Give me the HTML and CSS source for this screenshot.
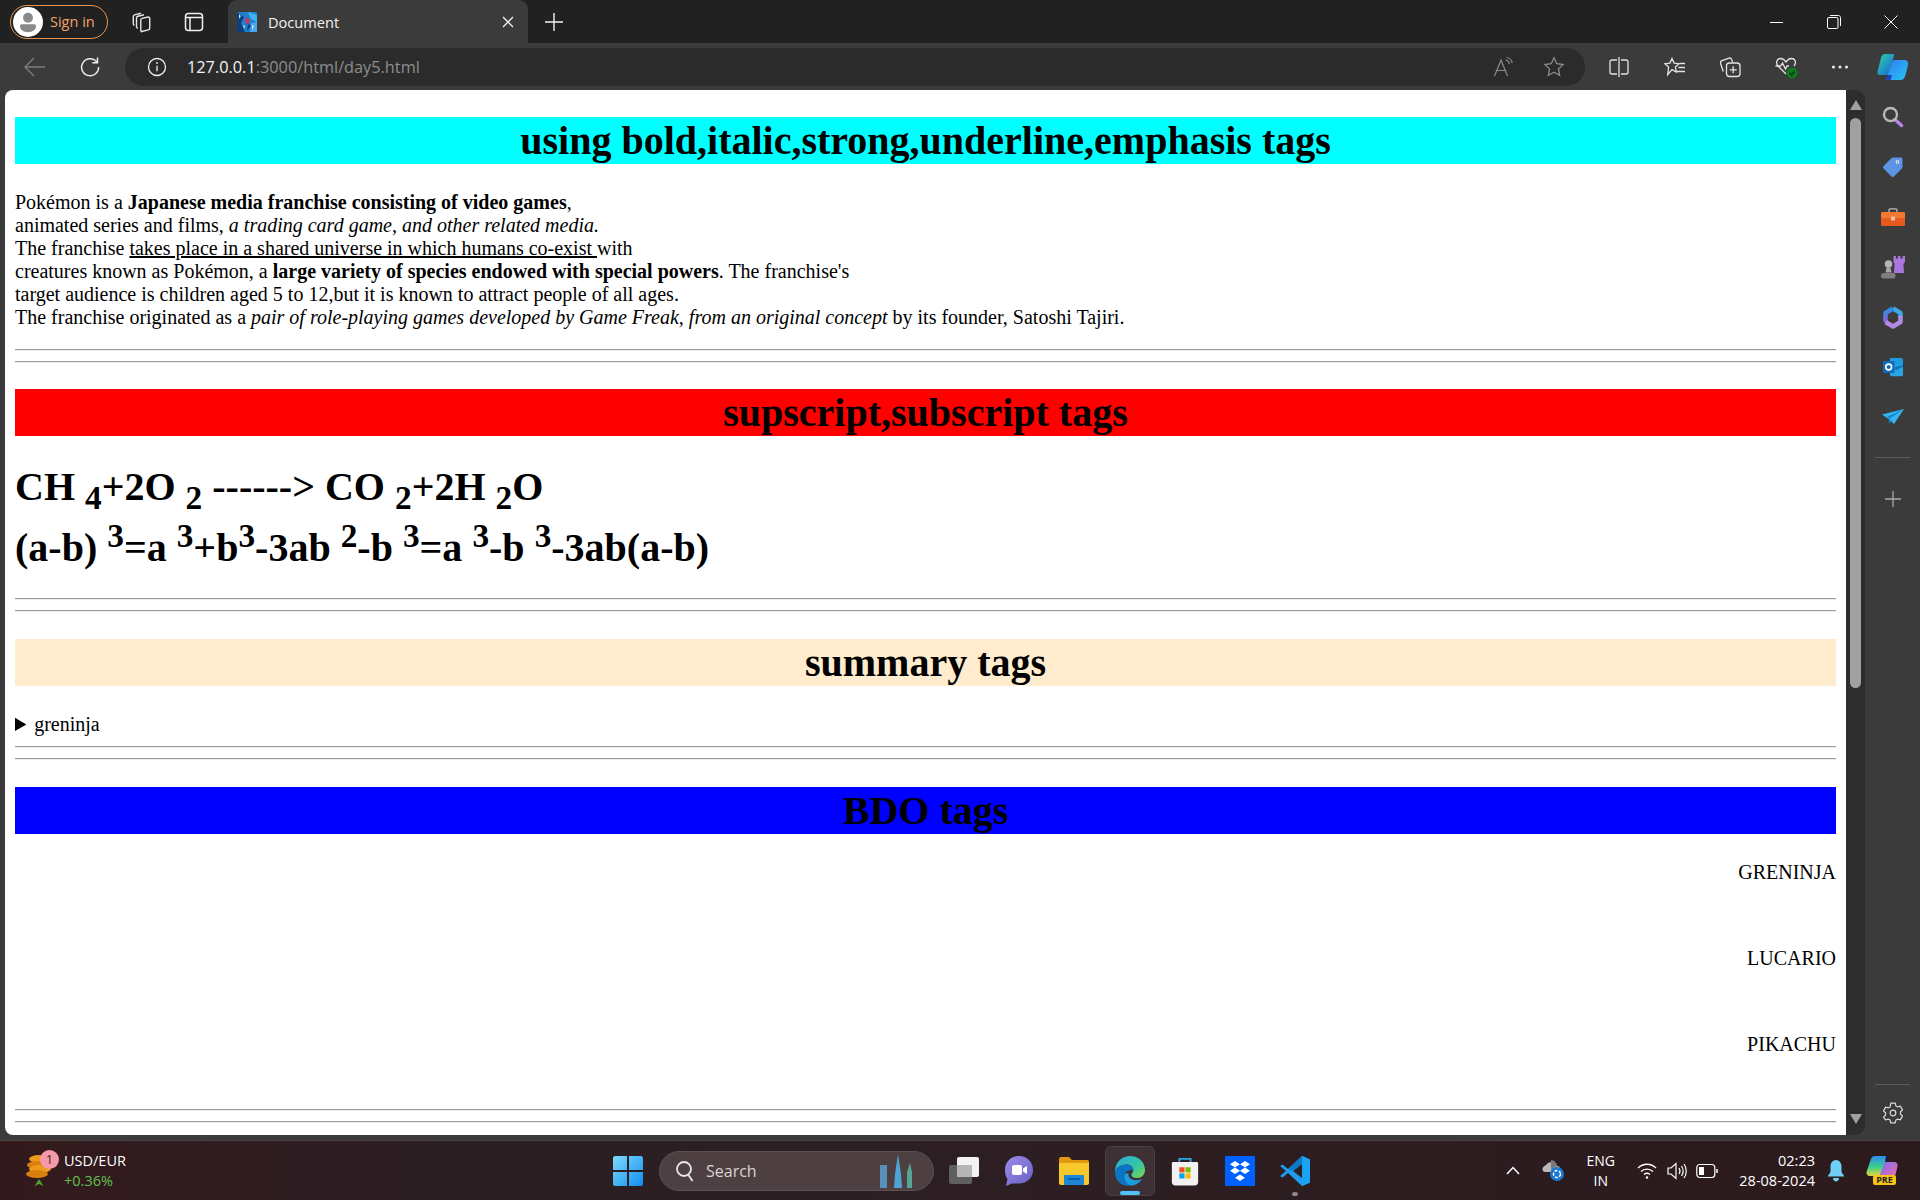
FILE: index.html
```html
<!DOCTYPE html>
<html lang="en">
<head>
    <meta charset="UTF-8">
    <title>Document</title>
    <link rel="stylesheet" href="styles.css">
</head>
<body>
    <!-- tab strip -->
    <div class="tabbar">
        <div class="signin">
            <span class="avatar">
                <svg width="30" height="30" viewBox="0 0 28 28"><circle cx="14" cy="14" r="14" fill="#fff"/><circle cx="14" cy="10" r="4.600" fill="#8a8a8a"/><path d="M6.500 17.500c0-1 .8-1.500 1.600-1.500h11.800c.8 0 1.600.5 1.600 1.500 0 4-3.400 6-7.500 6s-7.500-2-7.500-6z" fill="#8a8a8a"/></svg>
            </span>
            <span>Sign in</span>
        </div>
        <span class="strip-btn first">
            <svg width="22" height="22" viewBox="0 0 22 22" fill="none" stroke="#e6e6e6" stroke-width="1.400"><path d="M10.500 20.500l7-1.600c.8-.2 1.200-.8 1.200-1.600V7.200c0-.8-.7-1.400-1.600-1.200l-6 1.400c-.8.2-1.300.8-1.300 1.600v10.600c0 .7.300 1 .7 1.100z"/><path d="M6.800 17.500c-.9-.5-1.300-1-1.300-2V7c0-.9.500-1.500 1.300-1.700L13 3.700"/><path d="M3.400 14.500c-.8-.5-1.100-1.100-1.100-1.900V5.600c0-.9.500-1.500 1.300-1.700L10 2.300"/></svg>
        </span>
        <span class="strip-btn">
            <svg width="20" height="20" viewBox="0 0 20 20" fill="none" stroke="#f0f0f0" stroke-width="1.500"><rect x="1.500" y="1.500" width="17" height="17" rx="3"/><path d="M1.500 5.500h17M6 5.500v13"/></svg>
        </span>
        <div class="tab">
            <svg class="favicon" width="20" height="20" viewBox="0 0 20 20"><rect width="20" height="20" fill="#1f7fd0"/><path d="M0 0l7 5-3 6 4 9H0z" fill="#0d3f7a"/><path d="M11 0l9 3v7l-6-3z" fill="#3fb4ee"/><path d="M9 5l4 3-2 5-3-3z" fill="#c9395a"/><path d="M14 11l6-1v10h-7z" fill="#49a9ea"/><path d="M2 2l2 2-2 3zM15 13l2 1-2 4zM6 13l2 1-1 3z" fill="#bfe6fa"/><path d="M11 12l3 2-4 5z" fill="#12417f"/></svg>
            <span class="tab-title">Document</span>
            <svg class="tab-close" width="12" height="12" viewBox="0 0 12 12" stroke="#f2f2f2" stroke-width="1.300"><path d="M1 1l10 10M11 1L1 11"/></svg>
        </div>
        <svg class="newtab" width="18" height="18" viewBox="0 0 18 18" stroke="#f2f2f2" stroke-width="1.400"><path d="M9 0v18M0 9h18"/></svg>
        <div class="win-controls">
            <svg width="14" height="14" viewBox="0 0 14 14" stroke="#fff" stroke-width="1"><path d="M0 7.500h13"/></svg>
            <svg width="14" height="14" viewBox="0 0 14 14" fill="none" stroke="#fff" stroke-width="1"><rect x=".5" y="2.500" width="10.500" height="11" rx="1.500"/><path d="M3 .5h8.500c1 0 2 1 2 2V11"/></svg>
            <svg width="14" height="14" viewBox="0 0 14 14" stroke="#fff" stroke-width="1"><path d="M.5.5l13 13M13.500.5l-13 13"/></svg>
        </div>
    </div>

    <!-- address bar -->
    <div class="toolbar">
        <svg class="back" width="22" height="20" viewBox="0 0 22 20" fill="none" stroke="#7d7d7d" stroke-width="1.400"><path d="M21 10H1M10 1l-9 9 9 9"/></svg>
        <svg class="reload" width="22" height="22" viewBox="0 0 22 22" fill="none" stroke="#ececec" stroke-width="1.500"><path d="M18 6.300A8.500 8.500 0 1 0 19.600 11"/><path d="M18.500 1.500v5.200h-5.200"/></svg>
        <div class="address">
            <svg width="20" height="20" viewBox="0 0 20 20" fill="none" stroke="#efefef" stroke-width="1.300"><circle cx="10" cy="10" r="8.500"/><path d="M10 8.800v5.500"/><circle cx="10" cy="6" r=".9" fill="#efefef" stroke="none"/></svg>
            <span class="url"><span class="host">127.0.0.1</span>:3000/html/day5.html</span>
            <svg class="read" width="22" height="22" viewBox="0 0 22 22" fill="none" stroke="#8c8c8c" stroke-width="1.200"><path d="M1.500 20L8 4l6.500 16M4 14.500h9"/><path d="M12.500 4c2 .3 3.500 1.800 3.900 3.800M13.500 1.500c3 .4 5.200 2.600 5.700 5.600"/></svg>
            <svg class="fav" width="22" height="22" viewBox="0 0 22 22" fill="none" stroke="#8c8c8c" stroke-width="1.300"><path d="M11 1.800l2.800 5.900 6.400.8-4.700 4.400 1.200 6.400-5.700-3.100-5.700 3.100 1.200-6.400L1.800 8.500l6.400-.8z"/></svg>
        </div>
        <div class="tools">
            <svg width="20" height="20" viewBox="0 0 20 20" fill="none" stroke="#e4e4e4" stroke-width="1.300"><path d="M8 3H3C1.800 3 1 3.800 1 5v10c0 1.200.8 2 2 2h5M12 3h5c1.200 0 2 .8 2 2v10c0 1.200-.8 2-2 2h-5M10 0v20"/></svg>
            <svg width="22" height="20" viewBox="0 0 22 20" fill="none" stroke="#e4e4e4" stroke-width="1.300"><path d="M8 1.500l2.100 4.600 4.900.6-3.600 3.400.9 4.900L8 12.600l-4.300 5 .9-7.500L1 6.700l4.900-.6z"/><path d="M15.500 6.500h5.500M14.500 10.500h6.500M12.500 14.500H21"/></svg>
            <svg width="22" height="22" viewBox="0 0 22 22" fill="none" stroke="#e4e4e4" stroke-width="1.300"><rect x="7.500" y="7" width="13.500" height="13.500" rx="3"/><path d="M14.200 10.300v7M10.700 13.800h7"/><path d="M4.300 15.500l-2.700-8C1.300 6 2 5 3 4.600l7-2.500c1-.3 2.200.2 2.600 1.300L13.500 6"/></svg>
            <svg width="24" height="24" viewBox="0 0 24 24" fill="none"><path d="M12 19l-8-8C1.500 8 2.500 3.500 6.500 3.500c2.500 0 4.500 2 5.500 3.500 1-1.500 3-3.500 5.500-3.500 4 0 5 4.500 2.500 7.500" stroke="#e4e4e4" stroke-width="1.300"/><path d="M1.500 11h5l2-3 3 6 1.500-3h2" stroke="#e4e4e4" stroke-width="1.300"/><circle cx="18" cy="18" r="5.500" fill="#0f7a1c"/><path d="M15.500 18l2 2 3-3.500" stroke="#0c2e10" stroke-width="1.300"/></svg>
            <svg width="18" height="6" viewBox="0 0 18 6" fill="#e4e4e4"><circle cx="2.500" cy="3" r="1.600"/><circle cx="9" cy="3" r="1.600"/><circle cx="15.500" cy="3" r="1.600"/></svg>
            <svg width="32" height="28" viewBox="0 0 32 28"><defs><linearGradient id="cpa" x1="0" y1="0" x2="1" y2="1"><stop offset="0" stop-color="#2dd4a8"/><stop offset="1" stop-color="#1a5fd6"/></linearGradient><linearGradient id="cpb" x1="0" y1="0" x2="1" y2="1"><stop offset="0" stop-color="#2e7ef0"/><stop offset="1" stop-color="#27c3f5"/></linearGradient></defs><path d="M8 1h8c1 0 1.500.6 1.200 1.500L12 20c-.5 1.400-1.500 2-3 2H3c-2 0-3-1.500-2.500-3.500L4 5C4.600 2.500 6 1 8 1z" fill="url(#cpa)"/><path d="M18 7h9c3 0 4.700 2 4 5l-2.500 10c-.7 3-2.500 5-5 5h-13c-1 0-1.300-.6-1-1.500L15 10c.5-2 1.500-3 3-3z" fill="url(#cpb)"/><path d="M10 22h5l-1.500 5H10.500c-1 0-1.300-.6-1-1.500z" fill="#1d3fc0"/></svg>
        </div>
    </div>

    <div class="window">
        <main class="page">
            <h1 class="head-cyan">using bold,italic,strong,underline,emphasis tags</h1>
            <p>Pokémon is a <b>Japanese media franchise consisting of video games</b>,<br>
            animated series and films, <i>a trading card game, and other related media.</i><br>
            The franchise <u>takes place in a shared universe in which humans co-exist </u>with<br>
            creatures known as Pokémon, a <strong>large variety of species endowed with special powers</strong>. The franchise's<br>
            target audience is children aged 5 to 12,but it is known to attract people of all ages.<br>
            The franchise originated as a <em>pair of role-playing games developed by Game Freak, from an original concept</em> by its founder, Satoshi Tajiri.</p>
            <hr>
            <hr>
            <h1 class="head-red">supscript,subscript tags</h1>
            <h1 class="formula">CH <sub>4</sub>+2O <sub>2</sub> ------&gt; CO <sub>2</sub>+2H <sub>2</sub>O<br>
            (a-b) <sup>3</sup>=a <sup>3</sup>+b<sup>3</sup>-3ab <sup>2</sup>-b <sup>3</sup>=a <sup>3</sup>-b <sup>3</sup>-3ab(a-b)</h1>
            <hr>
            <hr>
            <h1 class="head-almond">summary tags</h1>
            <details>
                <summary><span class="sum-text">greninja</span></summary>
                <p>water type pokemon</p>
            </details>
            <hr>
            <hr>
            <h1 class="head-blue">BDO tags</h1>
            <p class="rtl">GRENINJA</p>
            <br>
            <p class="rtl">LUCARIO</p>
            <br>
            <p class="rtl">PIKACHU</p>
            <br>
            <hr>
            <hr>
        </main>

        <div class="scrollbar">
            <span class="arrow-up"></span>
            <span class="thumb"></span>
            <span class="arrow-down"></span>
        </div>

        <!-- edge sidebar -->
        <aside class="sidepanel">
            <span class="side-item">
                <svg width="22" height="22" viewBox="0 0 22 22" fill="none"><path d="M13 13.500l6.500 6" stroke="#b884e8" stroke-width="3.500" stroke-linecap="round"/><circle cx="8.500" cy="8.500" r="6.500" stroke="#b9b9b9" stroke-width="2.400"/></svg>
            </span>
            <span class="side-item">
                <svg width="22" height="22" viewBox="0 0 22 22"><path d="M11 1.500h8c.9 0 1.500.6 1.500 1.500v8c0 .6-.2 1-.6 1.400l-8 8c-.7.7-1.700.7-2.400 0L1.600 12.500c-.7-.7-.7-1.700 0-2.400l8-8c.4-.4.8-.6 1.400-.6z" fill="#5c94e6"/><circle cx="15.500" cy="6" r="1.800" fill="#fff"/><circle cx="15.500" cy="6" r=".8" fill="#2a4f8c"/></svg>
            </span>
            <span class="side-item">
                <svg width="24" height="18" viewBox="0 0 24 18"><path d="M8 4V2c0-.8.5-1.200 1.200-1.200h5.600c.7 0 1.200.4 1.200 1.200v2" fill="none" stroke="#bdbdbd" stroke-width="1.300"/><rect y="4" width="24" height="14" rx="1.500" fill="#e8591e"/><rect y="4" width="24" height="6" rx="1.500" fill="#f2792f"/><rect x="10" y="8.500" width="4" height="4" rx="1" fill="#f5c4a6"/></svg>
            </span>
            <span class="side-item">
                <svg width="24" height="24" viewBox="0 0 24 24"><path d="M12.500 1h2.400v2.400h2.100V1h2.400v2.400h2.100V1H24v6l-1.600 2 .6 9H12.800l.8-9-1.100-2z" fill="#a877dd"/><circle cx="7.500" cy="9" r="3.800" fill="#b4b4b4"/><path d="M5.500 12.500h4l1 5h-6z" fill="#a6a6a6"/><rect y="18" width="14.500" height="5.500" rx="2.500" fill="#7d7d7d"/></svg>
            </span>
            <span class="side-item">
                <svg width="20" height="23" viewBox="0 0 20 23" fill="none" stroke-width="4.500" stroke-linejoin="round"><defs><linearGradient id="m3a" x1="0" y1="0" x2="0" y2="1"><stop offset="0" stop-color="#2f8be8"/><stop offset="1" stop-color="#8a62de"/></linearGradient></defs><path d="M10 2.500L17.500 7v4" stroke="#3fa8e4"/><path d="M10 2.500L2.500 7v9" stroke="url(#m3a)"/><path d="M2.500 16l7.500 4.500 7.500-4.500V10" stroke="#b489e6"/></svg>
            </span>
            <span class="side-item">
                <svg width="20" height="20" viewBox="0 0 20 20"><path d="M7 1h11c1 0 2 .8 2 1.800v6H7z" fill="#1f9ae0"/><path d="M7 8h13v9.500c0 1-.8 1.800-1.800 1.800H8.800C7.800 19.300 7 18.500 7 17.500z" fill="#2aa5e4"/><path d="M7 11l13-3v2l-6.500 3z" fill="#0f78c4"/><rect y="4" width="11.500" height="12" rx="1.200" fill="#0f6cbd"/><circle cx="5.700" cy="10" r="2.900" fill="none" stroke="#fff" stroke-width="1.600"/></svg>
            </span>
            <span class="side-item">
                <svg width="22" height="16" viewBox="0 0 22 16"><path d="M0 5.500L22 0 12 15l-3.500-3.500z" fill="#35b4f2"/><path d="M5 7.800L22 0 7 10v5l3-3.500-1.500 0z" fill="#1487d0"/></svg>
            </span>
            <span class="side-line"></span>
            <span class="side-item plus">
                <svg width="16" height="16" viewBox="0 0 16 16" stroke="#a9a9a9" stroke-width="1.300"><path d="M8 0v16M0 8h16"/></svg>
            </span>
            <span class="side-line bottom"></span>
            <span class="side-item gear">
                <svg width="20" height="22" viewBox="0 0 20 22" fill="none" stroke="#dcdcdc" stroke-width="1.200"><circle cx="10" cy="11" r="2.800"/><path d="M7.800 1.200h4.400l.7 2.700 1.800 1 2.700-.8 2.100 3.800-2 1.900v2.400l2 1.900-2.100 3.800-2.700-.8-1.800 1-.7 2.700H7.800l-.7-2.700-1.800-1-2.700.8L.5 15.100l2-1.900v-2.400l-2-1.900 2.100-3.800 2.700.8 1.800-1z"/></svg>
            </span>
        </aside>
    </div>

    <!-- windows taskbar -->
    <footer class="taskbar">
        <div class="widget">
            <span class="coins">
                <svg width="26" height="34" viewBox="0 0 26 34"><ellipse cx="13" cy="5" rx="10" ry="4" fill="#f09a1c"/><ellipse cx="11" cy="11" rx="10" ry="4" fill="#d97f10"/><ellipse cx="14" cy="15" rx="11" ry="4" fill="#f09a1c"/><ellipse cx="11" cy="20" rx="11" ry="4" fill="#d97f10"/><path d="M13 25l4.500 7-4.500-2-4.500 2z" fill="#4fa32c"/></svg>
                <span class="badge">1</span>
            </span>
            <div class="widget-text">
                <span>USD/EUR</span>
                <span class="gain">+0.36%</span>
            </div>
        </div>

        <svg class="winlogo" width="30" height="30" viewBox="0 0 30 30"><defs><linearGradient id="win" x1="0" y1="0" x2="1" y2="1"><stop offset="0" stop-color="#7fd9fa"/><stop offset="1" stop-color="#0f8ff0"/></linearGradient></defs><path d="M0 2c0-1 1-2 2-2h12v14H0zM16 0h12c1 0 2 1 2 2v12H16zM0 16h14v14H2c-1 0-2-1-2-2zM16 16h14v12c0 1-1 2-2 2H16z" fill="url(#win)"/></svg>

        <div class="search">
            <svg width="20" height="22" viewBox="0 0 20 22" fill="none" stroke="#e8e8e8" stroke-width="1.800"><circle cx="9" cy="9" r="7"/><path d="M13.500 15l4 6"/></svg>
            <span>Search</span>
            <svg class="towers" width="36" height="34" viewBox="0 0 36 34"><path d="M1 11h7v23H1z" fill="#5a9fd0"/><path d="M19 0l3 20 1 14h-8l1-14z" fill="#4fb7ef"/><path d="M31 9l2 9v16h-5V18z" fill="#58b8a6"/></svg>
        </div>

        <div class="apps">
            <span class="app">
                <svg width="30" height="27" viewBox="0 0 30 27"><rect y="8" width="23" height="19" rx="2" fill="#5f5f5f"/><rect x="8" width="22" height="20" rx="2" fill="#f2f2f2"/><rect x="8" y="8" width="15" height="12" fill="#b5b5b5"/></svg>
            </span>
            <span class="app">
                <svg width="30" height="32" viewBox="0 0 30 32"><defs><linearGradient id="meet" x1="0" y1="0" x2="1" y2="1"><stop offset="0" stop-color="#9a8ce8"/><stop offset="1" stop-color="#6a5fc8"/></linearGradient></defs><path d="M15 1c8 0 14 6 14 14s-6 13.500-14 13.500H8L2 31l1.500-7C1.500 21.500 1 18.500 1 15 1 7 7 1 15 1z" fill="url(#meet)"/><rect x="8" y="10" width="10" height="10" rx="2" fill="#fff"/><path d="M19 13.500l4-2.500v8l-4-2.500z" fill="#fff"/></svg>
            </span>
            <span class="app">
                <svg width="30" height="28" viewBox="0 0 30 28"><path d="M0 2c0-1 .8-2 2-2h8l3 3h15c1.200 0 2 .8 2 2v4H0z" fill="#e09a12"/><path d="M0 6h30v20c0 1.200-.8 2-2 2H2c-1.200 0-2-.8-2-2z" fill="#f7c92c"/><rect x="5" y="18" width="20" height="10" rx="1" fill="#1b86d6"/><rect x="9" y="21" width="12" height="2" fill="#0d5ea8"/></svg>
            </span>
            <span class="app active">
                <svg width="30" height="30" viewBox="0 0 32 32"><defs><linearGradient id="edgeg" x1="0" y1="0" x2="1" y2="1"><stop offset="0" stop-color="#2aa9e0"/><stop offset=".6" stop-color="#37c6a0"/><stop offset="1" stop-color="#7ed84a"/></linearGradient></defs><path d="M16 0c9 0 16 6.500 16 15 0 5-3.500 8.500-8.500 8.500-3 0-6-1-6-3.500 0-1.500 2-2 2-5 0-3.500-3-6-7-6C7 9 2 12 0 17 0 7 7 0 16 0z" fill="url(#edgeg)"/><path d="M0 17c.5-5 6-8 12.500-8 4 0 7 2.500 7 6-2 0-8 0-9.500 5-1 4 1 9 6 11.500C7 33 0 26 0 17z" fill="#0c74c4"/><path d="M10 20c-1 5 2 10 6.500 11.500 5 0 9.500-2.500 12-7-4 2-9 2-12-.5-2-1.500-2.500-3.500-2-5.500-2 0-4 0-4.500 1.500z" fill="#1b9de2"/></svg>
                <span class="running"></span>
            </span>
            <span class="app">
                <svg width="30" height="30" viewBox="0 0 30 32"><path d="M9 7V3h12v4" fill="none" stroke="#27a5e0" stroke-width="2"/><path d="M1 8c0-1 .8-1.500 1.500-1.500h25c.7 0 1.500.5 1.500 1.500v20c0 2-1.500 3.500-3.500 3.500h-21c-2 0-3.500-1.500-3.500-3.500z" fill="#f2f2f2"/><rect x="9" y="12" width="5.500" height="5.500" fill="#f25022"/><rect x="15.500" y="12" width="5.500" height="5.500" fill="#7fba00"/><rect x="9" y="18.500" width="5.500" height="5.500" fill="#00a4ef"/><rect x="15.500" y="18.500" width="5.500" height="5.500" fill="#ffb900"/></svg>
            </span>
            <span class="app">
                <svg width="30" height="30" viewBox="0 0 30 30"><rect width="30" height="30" fill="#0061fe"/><path d="M10 5l5 3.200-5 3.200-5-3.200zM20 5l5 3.200-5 3.200-5-3.200zM10 11.500l5 3.200-5 3.200-5-3.200zM20 11.500l5 3.200-5 3.200-5-3.200zM15 18.500l5 3.200-5 3.200-5-3.200z" fill="#fff"/></svg>
            </span>
            <span class="app">
                <svg width="30" height="30" viewBox="0 0 30 30"><path d="M22 0l8 3.500v23L22 30 8 17l-5.500 4.500L0 20l6-5-6-5 2.500-1.500L8 13z" fill="#1f9cf0"/><path d="M22 8L13 15l9 7z" fill="#2d2024"/><path d="M22 0l8 3.500v23L22 30z" fill="#1aa3f2"/><path d="M22 0v8L13 15 8 13z" fill="#0b7bc7"/></svg>
                <span class="open-dot"></span>
            </span>
        </div>

        <div class="tray">
            <svg width="14" height="9" viewBox="0 0 14 9" fill="none" stroke="#fff" stroke-width="1.500"><path d="M1 8l6-6.500L13 8"/></svg>
            <svg class="onedrive" width="24" height="24" viewBox="0 0 24 24"><path d="M5 6c3-4 9-4 11 1 3 0 4 3 3 6H4C1 13 0 8 5 6z" fill="#b8b8b8"/><path d="M10 1c3 0 6 3 6 6l-6 4z" fill="#7a7a7a"/><circle cx="16" cy="15" r="7" fill="#1878d0"/><circle cx="16" cy="15" r="3.500" fill="none" stroke="#fff" stroke-width="1.500" stroke-dasharray="3 1.500"/></svg>
            <div class="lang"><span>ENG</span><span>IN</span></div>
            <svg class="wifi" width="20" height="18" viewBox="0 0 20 18" fill="none" stroke="#fff" stroke-width="1.300"><path d="M1 6c5-5 13-5 18 0M4 9.500c3.500-3.300 8.500-3.300 12 0M7 12.500c1.800-1.500 4.200-1.500 6 0"/><circle cx="10" cy="15.500" r="1.200" fill="#fff" stroke="none"/></svg>
            <svg class="speaker" width="20" height="20" viewBox="0 0 20 20" fill="none" stroke="#fff" stroke-width="1.200"><path d="M1 7h3l5-4.500v15L4 13H1z"/><path d="M12 7c1.200 1.800 1.200 4.200 0 6M14.500 5c2 3 2 7 0 10M17 3c3 4 3 10 0 14"/></svg>
            <svg class="battery" width="22" height="16" viewBox="0 0 22 16" fill="none" stroke="#fff" stroke-width="1.200"><rect x=".8" y="1.500" width="18" height="13" rx="3"/><rect x="3" y="4" width="5" height="8" fill="#fff" stroke="none"/><path d="M21 6v4" stroke-width="1.500"/></svg>
            <div class="clock"><span>02:23</span><span>28-08-2024</span></div>
            <svg class="bell" width="18" height="24" viewBox="0 0 18 24"><path d="M9 1c3.500 0 5.500 3 5.500 6.500V13l3 4.500H.5l3-4.500V7.500C3.500 4 5.500 1 9 1z" fill="#6fd0f5"/><path d="M6 19h6c0 2-1.300 3.500-3 3.500S6 21 6 19z" fill="#6fd0f5"/></svg>
            <span class="pre-icon">
                <svg width="32" height="20" viewBox="0 0 32 20"><defs><linearGradient id="cpre" x1="0" y1="0" x2="0" y2="1"><stop offset="0" stop-color="#2f8cf0"/><stop offset=".55" stop-color="#3ad08a"/><stop offset="1" stop-color="#e8d63a"/></linearGradient><linearGradient id="cprb" x1="0" y1="0" x2="1" y2="1"><stop offset="0" stop-color="#7a6cf0"/><stop offset="1" stop-color="#f06cb0"/></linearGradient></defs><path d="M9 0h11c1.500 0 2 1 1.500 2L15 18c-.5 1.300-1.500 2-3 2H4c-2.500 0-4-2-3.500-4L5 3c.5-2 2-3 4-3z" fill="url(#cpre)"/><path d="M21 6h7c2.500 0 4 2 3.500 4l-1.800 8c-.3 1.200-1.200 2-2.700 2H15c-1 0-1.300-.6-1-1.500l4-10.500c.4-1.300 1.500-2 3-2z" fill="url(#cprb)"/><path d="M20 0h3l-3 6h-1z" fill="#141a3a"/></svg>
                <span class="pre-tag">PRE</span>
            </span>
        </div>
    </footer>
</body>
</html>
```

FILE: styles.css
```css
html, body {
    margin: 0;
    padding: 0;
    height: 1200px;
    overflow: hidden;
}
body {
    display: flex;
    flex-direction: column;
    width: 1920px;
    background-color: #3b3b3b;
    font-family: "Open Sans", "Noto Sans", sans-serif;
    color: #fff;
}
svg {
    display: block;
    flex-shrink: 0;
}

/* tab strip */
.tabbar {
    height: 43px;
    background-color: #212121;
    display: flex;
    align-items: center;
    padding-left: 10px;
}
.signin {
    width: 98px;
    height: 34px;
    box-sizing: border-box;
    border: 1.5px solid #e8954e;
    border-radius: 17px;
    display: flex;
    align-items: center;
    gap: 7px;
    padding-left: 2px;
    color: #f0a468;
    font-size: 14.5px;
}
.avatar {
    display: block;
}
.strip-btn {
    width: 62px;
    display: flex;
    justify-content: center;
}
.strip-btn.first {
    margin-left: 3px;
}
.strip-btn + .strip-btn {
    margin-left: -10px;
}
.tab {
    margin-left: 3px;
    width: 300px;
    height: 43px;
    box-sizing: border-box;
    background-color: #3b3b3b;
    border-radius: 9px 9px 0 0;
    display: flex;
    align-items: center;
    padding-left: 9px;
}
.tab-title {
    margin-left: 11px;
    font-size: 14.6px;
    color: #f2f2f2;
}
.tab-close {
    margin-left: auto;
    margin-right: 14px;
}
.newtab {
    margin-left: 17px;
}
.win-controls {
    margin-left: auto;
    margin-right: 22px;
    display: flex;
    gap: 43px;
}

/* address bar */
.toolbar {
    height: 47px;
    display: flex;
    align-items: center;
    padding-left: 24px;
    background-color: #3b3b3b;
}
.reload {
    margin-left: 33px;
}
.address {
    margin-left: 24px;
    width: 1460px;
    height: 38px;
    background-color: #2b2b2b;
    border-radius: 19px;
    display: flex;
    align-items: center;
    padding-left: 22px;
    box-sizing: border-box;
}
.url {
    margin-left: 20px;
    font-size: 16.3px;
    color: #8e8e8e;
}
.host {
    color: #f4f4f4;
}
.read {
    margin-left: auto;
}
.fav {
    margin-left: 28px;
    margin-right: 20px;
}
.tools {
    display: flex;
    align-items: center;
    margin-left: 24px;
    gap: 33px;
}
.tools svg:nth-child(2) {
    margin-left: 2px;
}
.tools svg:last-child {
    margin-left: -5px;
}

/* page area */
.window {
    height: 1045px;
    display: flex;
}
.page {
    width: 1841px;
    margin-left: 5px;
    box-sizing: border-box;
    padding: 0 10px;
    background-color: #fff;
    color: #000;
    font-family: "Liberation Serif", serif;
    font-size: 20px;
    overflow: hidden;
    border-radius: 8px 0 0 8px;
}
h1 {
    font-size: 40px;
    margin: 26.8px 0;
    text-align: center;
}
p {
    margin: 20px 0;
}
hr {
    margin: 10px 0;
    border: 0;
    border-top: 1px solid #9a9a9a;
    border-bottom: 1px solid #ececec;
}
.head-cyan { background-color: aqua; }
.head-red { background-color: red; }
.head-almond { background-color: blanchedalmond; }
.head-blue { background-color: blue; }
.formula {
    text-align: left;
}
.sum-text {
    margin-left: -2px;
}
.rtl {
    text-align: right;
}

/* scrollbar */
.scrollbar {
    width: 19px;
    background-color: #2d2d2d;
    border-radius: 0 10px 10px 0;
    display: flex;
    flex-direction: column;
    align-items: center;
}
.thumb {
    width: 11px;
    height: 570px;
    margin-top: 8px;
    background-color: #a0a0a0;
    border-radius: 6px;
}
.arrow-up {
    margin-top: 10px;
    border-left: 6px solid transparent;
    border-right: 6px solid transparent;
    border-bottom: 10px solid #a0a0a0;
}
.arrow-down {
    margin-top: auto;
    margin-bottom: 11px;
    border-left: 6px solid transparent;
    border-right: 6px solid transparent;
    border-top: 10px solid #a0a0a0;
}

/* side panel */
.sidepanel {
    width: 55px;
    display: flex;
    flex-direction: column;
    align-items: center;
    padding: 2px 0;
    box-sizing: border-box;
}
.side-item {
    height: 50px;
    display: flex;
    align-items: center;
    justify-content: center;
}
.side-line {
    width: 35px;
    height: 1px;
    background-color: #5c5c5c;
    margin-top: 15px;
}
.side-item.plus {
    margin-top: 16px;
}
.side-line.bottom {
    margin-top: auto;
}
.side-item.gear {
    margin-top: 8px;
    height: 40px;
}

/* taskbar */
.taskbar {
    margin-top: 5px;
    height: 60px;
    background: linear-gradient(90deg, #33191c 0%, #2b1f24 25%, #2d1e22 60%, #2c1a1c 100%);
    border-top: 1px solid #4a4145;
    box-sizing: border-box;
    display: flex;
    align-items: center;
    position: relative;
}
.widget {
    display: flex;
    align-items: center;
    margin-left: 26px;
    width: 587px;
}
.coins {
    position: relative;
    display: block;
}
.badge {
    position: absolute;
    top: -4px;
    right: -7px;
    width: 19px;
    height: 19px;
    border-radius: 50%;
    background-color: #f59aa8;
    color: #2b1f24;
    font-size: 12px;
    text-align: center;
    line-height: 19px;
}
.widget-text {
    display: flex;
    flex-direction: column;
    margin-left: 12px;
    font-size: 14.5px;
    line-height: 20px;
}
.gain {
    color: #62c14a;
}
.search {
    margin-left: 16px;
    width: 275px;
    height: 40px;
    box-sizing: border-box;
    background-color: #4e3f42;
    border: 1px solid #5d5053;
    border-radius: 20px;
    display: flex;
    align-items: center;
    padding-left: 15px;
    gap: 11px;
    font-size: 16px;
    color: #d9d4d4;
}
.towers {
    margin-left: auto;
    margin-right: 18px;
    opacity: .85;
}
.apps {
    margin-left: 5px;
    display: flex;
    gap: 5.2px;
}
.app {
    width: 50px;
    height: 50px;
    display: flex;
    align-items: center;
    justify-content: center;
    position: relative;
}
.app.active {
    background-color: #3d3135;
    border: 1px solid #4a3f43;
    border-radius: 6px;
    box-sizing: border-box;
}
.running {
    position: absolute;
    bottom: 0;
    left: 14px;
    width: 20px;
    height: 4px;
    border-radius: 2px;
    background-color: #4fc3f7;
}
.open-dot {
    position: absolute;
    bottom: 0;
    left: 22px;
    width: 6px;
    height: 4px;
    border-radius: 50%;
    background-color: #8c8c8c;
}
.tray {
    margin-left: auto;
    display: flex;
    align-items: center;
    margin-right: 22px;
}
.onedrive {
    margin-left: 21px;
}
.lang {
    margin-left: 22px;
    display: flex;
    flex-direction: column;
    align-items: center;
    font-size: 14px;
    line-height: 20px;
}
.wifi {
    margin-left: 22px;
}
.speaker {
    margin-left: 10px;
}
.battery {
    margin-left: 9px;
}
.clock {
    margin-left: 20px;
    width: 77px;
    display: flex;
    flex-direction: column;
    align-items: flex-end;
    font-size: 14.5px;
    line-height: 20px;
    white-space: nowrap;
}
.bell {
    margin-left: 12px;
}
.pre-icon {
    margin-left: 21px;
    padding-bottom: 9px;
    position: relative;
    display: block;
}
.pre-tag {
    position: absolute;
    right: 2px;
    bottom: 0;
    width: 23px;
    background-color: #f5c518;
    color: #222;
    font-size: 9px;
    font-weight: 700;
    line-height: 10px;
    text-align: center;
    border-radius: 2px;
}
```
